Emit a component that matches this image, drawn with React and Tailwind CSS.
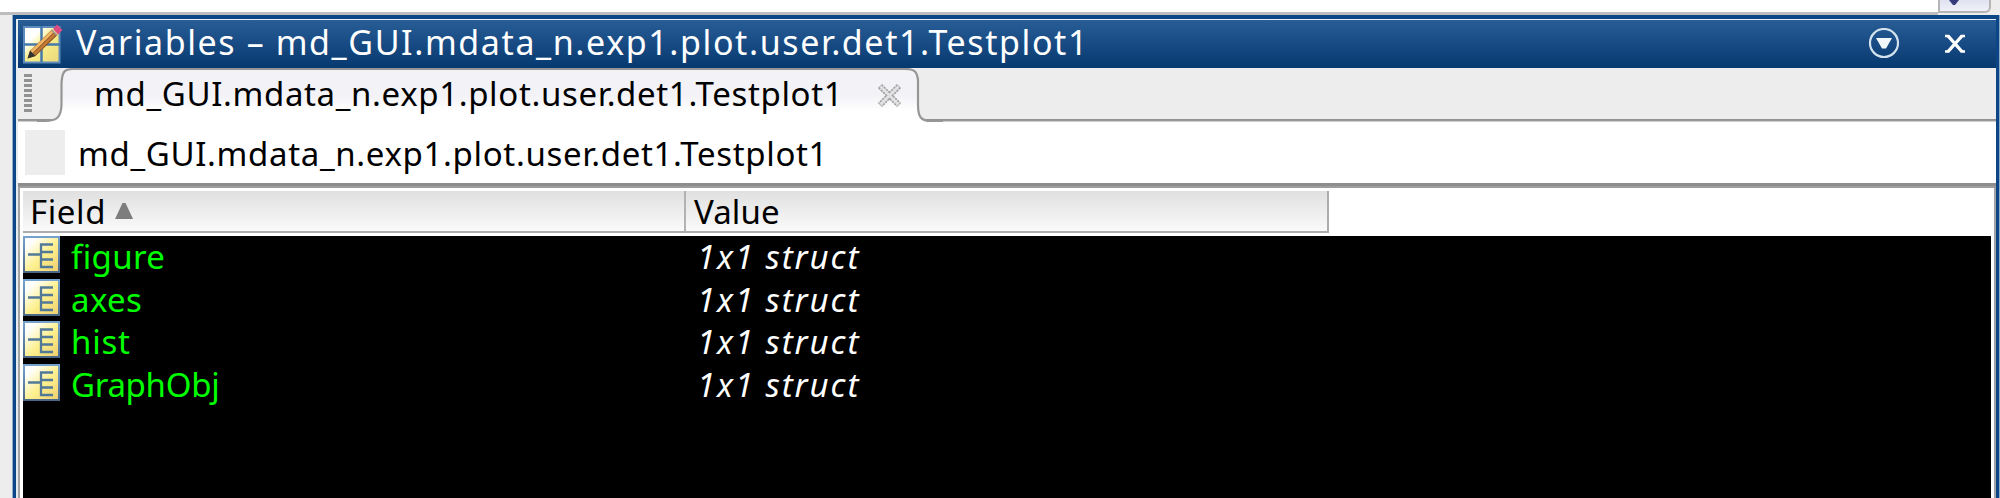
const rows = [
  { name: "figure", spacing: "tracking-[0.35px]" },
  { name: "axes", spacing: "tracking-[0.4px]" },
  { name: "hist", spacing: "tracking-[0.8px]" },
  { name: "GraphObj", spacing: "tracking-[-0.3px]" },
];

function EditIcon() {
  return (
    <svg className="block h-[40px] w-[40px] shrink-0" viewBox="0 0 40 40">
      <defs>
        <linearGradient id="pane" x1="0" y1="0" x2="1" y2="1">
          <stop offset="0.25" stopColor="#ffffff" />
          <stop offset="0.48" stopColor="#f8f08a" />
          <stop offset="1" stopColor="#ecd77c" />
        </linearGradient>
      </defs>
      <rect x="0" y="2" width="37.500" height="37.500" fill="#5d8bbb" />
      <rect x="2" y="4" width="33.500" height="33.500" fill="url(#pane)" />
      <path d="M18.500 2V38M1 20.500H37" stroke="#477bac" strokeWidth="2.500" />
      <path d="M4.500 34.500L7 27L29 5.500L34.500 11L12.500 32Z" fill="#8b4f23" />
      <path d="M8 28.500L30 7" stroke="#f0b765" strokeWidth="3" />
      <path d="M10.500 31L32 10" stroke="#c07a34" strokeWidth="2.500" />
      <path d="M4.500 34.500L7 26.500L12.500 32Z" fill="#333333" />
      <path d="M30 5L34 .5L39.500 6L35 10.500Z" fill="#dc4c82" />
      <path d="M28.500 6L34 11.500" stroke="#9d9895" strokeWidth="1.500" />
    </svg>
  );
}

function StructIcon() {
  return (
    <svg className="block h-[37px] w-[37px] shrink-0" viewBox="0 0 37 37">
      <defs>
        <linearGradient id="cell" x1="0" y1="0" x2="1" y2="1">
          <stop offset="0.15" stopColor="#ffffff" />
          <stop offset="0.55" stopColor="#fdf08e" />
          <stop offset="1" stopColor="#edcf70" />
        </linearGradient>
        <linearGradient id="edge" x1="0" y1="0" x2="0" y2="1">
          <stop offset="0" stopColor="#76a3cf" />
          <stop offset="1" stopColor="#4b6685" />
        </linearGradient>
      </defs>
      <rect width="37" height="37" fill="url(#edge)" />
      <rect x="2" y="2" width="33" height="33" fill="url(#cell)" />
      <path d="M5 18.500H18M30 8.500H18V31H30M18 16H30M18 23.500H30" fill="none" stroke="#527a98" strokeWidth="2.300" />
    </svg>
  );
}

function TitleBar() {
  return (
    <div className="flex h-[48px] items-center bg-linear-to-b from-[#285d96] to-[#063970] pl-[5px] text-white">
      <EditIcon />
      <span className="ml-[13px] pb-[3px] text-[34px] leading-[45px] whitespace-pre tracking-[1.6px]">Variables – md_GUI.mdata_n.exp1.plot.user.det1.Testplot1</span>
      <svg className="mr-[44px] ml-auto block h-[32px] w-[32px]" viewBox="0 0 32 32">
        <circle cx="16" cy="15" r="14" fill="none" stroke="#d3e2ed" strokeWidth="2.200" />
        <path d="M8 10H24L18 20.500H14Z" fill="#f2f7fa" />
      </svg>
      <svg className="mr-[30px] block h-[20px] w-[22px]" viewBox="0 0 22 20">
        <path d="M1 2H4.500L17.500 17.500H21M21 2H17.500L4.500 17.500H1" fill="none" stroke="#fff" strokeWidth="2.500" />
        <path d="M4 2L18 17.500M18 2L4 17.500" stroke="#fff" strokeWidth="3.200" />
      </svg>
    </div>
  );
}

function TabStrip() {
  return (
    <div className="flex h-[54px] bg-[linear-gradient(#ededed_51px,#8f8f8f_51px,#9c9c9c_53px,#ffffff_54px)]">
      <div className="flex w-[14px] shrink-0 flex-col gap-[2px] pt-[6px] pl-[6px]">
        {Array.from({ length: 8 }, (_, i) => (
          <i key={i} className="block h-[3px] w-[8px] shrink-0 bg-[#929292]" />
        ))}
      </div>
      <div className="relative ml-[5px] h-[55px] w-[906px]">
        <svg className="absolute top-0 left-0 block" width="906" height="55" viewBox="0 0 906 55">
          <defs>
            <linearGradient id="tab" x1="0" y1="0" x2="0" y2="1">
              <stop offset="0" stopColor="#f3f3f7" />
              <stop offset="0.5" stopColor="#f3f3f7" />
              <stop offset="0.78" stopColor="#ffffff" />
            </linearGradient>
          </defs>
          <path d="M0 55V53H8C20 53 24 49 24.500 37V16C25 4 27 1 36 1H868C878 1 880 4 881 12V37C881 49 884 53 894 53H906V55Z" fill="url(#tab)" />
          <path d="M0 53H8C20 53 24 49 24.500 37V16C25 4 27 1 36 1H868C878 1 880 4 881 12V37C881 49 884 53 894 53H906" fill="none" stroke="#969696" strokeWidth="2.200" />
        </svg>
        <div className="relative flex h-[52px] items-center pl-[57px]">
          <span className="text-[33px] leading-[52px] tracking-[0.64px] whitespace-pre">md_GUI.mdata_n.exp1.plot.user.det1.Testplot1</span>
          <svg className="absolute top-[15px] left-[840px] block h-[25px] w-[25px]" viewBox="0 0 25 25">
            <path d="M3 3L22 22M22 3L3 22" stroke="#a5a5a5" strokeWidth="6" strokeDasharray="2.500 .7" />
            <path d="M3.500 3.500L21.500 21.500M21.500 3.500L3.500 21.500" stroke="#e2e2e4" strokeWidth="2.500" />
          </svg>
        </div>
      </div>
    </div>
  );
}

function FieldTable() {
  return (
    <div className="flex min-h-0 flex-1 flex-col border-x-2 border-[#a3a3a3] bg-white pr-[3px] pl-[3px]">
      <div className="mt-[3px] flex h-[42px] w-[1306px] shrink-0 border-r-2 border-b-2 border-[#acacac] bg-linear-to-b from-[#e0e0e0] to-[#fafafa]">
        <div className="flex w-[663px] shrink-0 items-center border-r-2 border-[#b2b2b2] pl-[7px]">
          <span className="pt-[1px] text-[33px] leading-[40px] tracking-[0.6px]">Field</span>
          <svg className="ml-[9px] block h-[16px] w-[18px]" viewBox="0 0 18 16">
            <path d="M7.500 0H10.500L18 16H0Z" fill="#7d7d7d" />
          </svg>
        </div>
        <span className="pt-[1px] pl-[8px] text-[33px] leading-[40px] tracking-[0.1px]">Value</span>
      </div>
      <div className="mt-[3px] min-h-0 flex-1 bg-black">
        {rows.map((row) => (
          <div key={row.name} className="flex h-[42.670px]">
            <StructIcon />
            <span className={`w-[637px] shrink-0 pl-[11px] text-[33px] leading-[41px] text-[#00ff00] ${row.spacing}`}>{row.name}</span>
            <span className="text-[33px] leading-[41px] tracking-[1.9px] text-white italic">1x1 struct</span>
          </div>
        ))}
      </div>
    </div>
  );
}

export default function App() {
  return (
    <div className="flex h-[498px] w-[2000px] flex-col overflow-hidden bg-[#ededed] font-['Noto_Sans',sans-serif] text-black">
      <div className="flex h-[15px] shrink-0">
        <div className="h-[15px] w-[1938px] border-b-3 border-[#bdbdbd] bg-white" />
        <div className="flex h-[13px] w-[53px] justify-start rounded-br-md border-r-2 border-b-2 border-l-2 border-[#b5b5b5] bg-linear-to-b from-[#dfe2f0] to-[#f0f1f8] pl-[9px]">
          <svg className="block h-[5px] w-[10px]" viewBox="0 0 10 5">
            <path d="M0 0H10L6 5H4Z" fill="#343c7c" />
          </svg>
        </div>
      </div>
      <div className="ml-[12px] flex min-h-0 w-[1988px] flex-1 flex-col border-x border-[#8fabc9]">
        <div className="flex min-h-0 flex-1 flex-col border-x-3 border-t-4 border-[#0b4687]">
          <div className="flex min-h-0 flex-1 flex-col border-t border-l-2 border-[#e6ebf1] bg-white">
            <TitleBar />
            <TabStrip />
            <div className="flex h-[61px] shrink-0 items-center bg-white pl-[7px]">
              <div className="h-[45px] w-[40px] bg-[#ededed]" />
              <span className="ml-[13px] pt-[2px] text-[33px] leading-[59px] tracking-[0.66px] whitespace-pre">md_GUI.mdata_n.exp1.plot.user.det1.Testplot1</span>
            </div>
            <div className="h-[5px] shrink-0 border-b-2 border-[#9d9d9d] bg-[#8d8d8d]" />
            <FieldTable />
          </div>
        </div>
      </div>
    </div>
  );
}
